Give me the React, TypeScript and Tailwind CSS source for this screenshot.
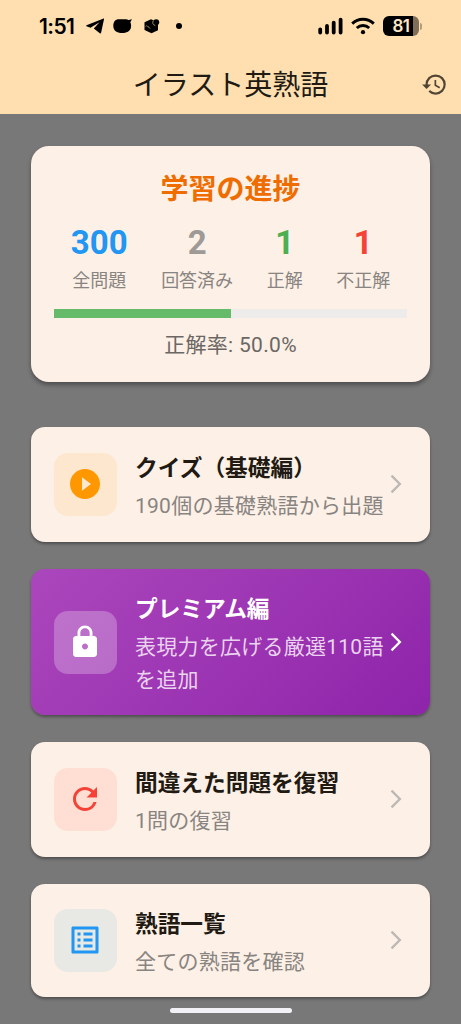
import type { ReactNode } from 'react';
import { MdArrowForwardIos, MdHistory, MdListAlt, MdLock, MdPlayCircleFilled, MdRefresh } from 'react-icons/md';

function StatusBar() {
  return (
    <div className="flex h-[54px] items-center pr-[39px] pb-[2px] pl-[39px] text-black">
      <span className="w-[38px] font-[Inter] text-[21px] leading-none font-semibold tracking-[-0.6px]">1:51</span>
      <svg className="ml-[9px] h-4 w-[18px]" viewBox="0 0 18 16" fill="currentColor">
        <path d="M17.600 0.600 0.500 7.200c-.5.200-.5.900 0 1.100L4.500 9.800 13.500 4.200 7.800 10.400 13.800 15.200c.6.400 1.200.1 1.300-.5L18 1.200c.1-.4-.1-.7-.4-.6Z" />
      </svg>
      <svg className="ml-[9px] h-4 w-[19px]" viewBox="0 0 19 16" fill="currentColor">
        <path d="M6 1.200h7c1 0 1.700.4 2.400.9.9.1 2-.2 3.300-1-.2 1.400-.8 2.400-1.400 3.100.6 1 .8 2.200.8 3.800C18.100 12.700 14.500 15 9.200 15 3.700 15 .3 12.500.3 8 .3 3.800 2.200 1.200 6 1.200Z" />
      </svg>
      <svg className="ml-[12px] h-4 w-4" viewBox="0 0 16 16" fill="currentColor">
        <path d="M.5 4.300 7 1.300l7 3v8L7.500 15.300.5 12Z" />
        <circle cx="12.200" cy="4.300" r="3" />
        <path d="M9.300 2.500c-1.300 2.200-.3 4.300 2 5.200" stroke="#ffdfb0" strokeWidth=".6" fill="none" />
        <path d="M1.500 8.400 3 7.600l1.500 2.200M4.300 8.300l2 2.500" stroke="#a08a6a" strokeWidth=".7" fill="none" />
      </svg>
      <span className="ml-[16px] size-[6px] rounded-full bg-black" />
      <svg className="ml-auto h-[18px] w-[26px]" viewBox="0 0 26 18" stroke="currentColor" strokeWidth="3.800" strokeLinecap="round">
        <path d="M2.200 12.300v3.300M9 9v6.600M15.700 5.600v10M22.600 2.600v13" />
      </svg>
      <svg className="ml-[7px] h-[18px] w-6" viewBox="0 0 24 18" fill="none" stroke="currentColor" strokeWidth="2.900">
        <path d="M1.200 6.600a15.500 15.500 0 0 1 21.600 0M5.800 11a9 9 0 0 1 12.400 0" />
        <circle cx="12" cy="15.200" r="2.100" fill="currentColor" stroke="none" />
      </svg>
      <div className="ml-[8px] flex items-center">
        <div className="flex h-[20px] w-[36px] items-center justify-center overflow-hidden rounded-[6px] bg-[linear-gradient(to_right,#000_82%,#806f58_82%)] font-[Inter] text-[17px] leading-none font-semibold tracking-[-0.5px] text-[#ffe7c8]">
          81
        </div>
        <span className="ml-[1px] h-[7px] w-[2px] rounded-r bg-[#b39c7b]" />
      </div>
    </div>
  );
}

function Header() {
  return (
    <header className="h-[114px] bg-[#ffdfb0]">
      <StatusBar />
      <div className="grid h-[58px] grid-cols-[60px_1fr_60px] items-center">
        <h1 className="col-start-2 pt-[3px] text-center text-[28px] leading-[58px] font-normal whitespace-nowrap text-[#211a13]">イラスト英熟語</h1>
        <MdHistory className="ml-[20px] size-[27px] text-[#514534]" />
      </div>
    </header>
  );
}

function Stat({ value, label, color }: { value: string; label: string; color: string }) {
  return (
    <div className="flex flex-col items-center">
      <span className={`text-[33px] leading-[38px] font-bold ${color}`}>{value}</span>
      <span className="mt-[6px] text-[18px] leading-[26px] text-[#888481]">{label}</span>
    </div>
  );
}

function ProgressCard() {
  return (
    <section className="mt-[32px] h-[236px] rounded-[18px] bg-[#fdf0e6] px-[23px] pt-[24px] shadow-[0_3px_4px_rgba(0,0,0,0.35)]">
      <h2 className="text-center text-[28px] leading-[40px] font-bold text-[#ef6c00]">学習の進捗</h2>
      <div className="mt-[14px] flex justify-around">
        <Stat value="300" label="全問題" color="text-[#2196f3]" />
        <Stat value="2" label="回答済み" color="text-[#9e9a97]" />
        <Stat value="1" label="正解" color="text-[#4caf50]" />
        <Stat value="1" label="不正解" color="text-[#f44336]" />
      </div>
      <div className="mt-[15px] h-[9px] bg-[#eeecea]">
        <div className="h-full w-1/2 bg-[#66bb6a]" />
      </div>
      <p className="mt-[11px] text-center text-[21px] leading-[32px] tracking-[0.300px] text-[#6b6764]">正解率: 50.0%</p>
    </section>
  );
}

interface MenuCardProps {
  icon: ReactNode;
  title: string;
  subtitle: string;
  card: string;
  tile: string;
  titleColor: string;
  subtitleColor: string;
  arrowColor: string;
}

function MenuCard({ icon, title, subtitle, card, tile, titleColor, subtitleColor, arrowColor }: MenuCardProps) {
  return (
    <section className={`flex items-center rounded-[14px] pr-[23px] pl-[23px] shadow-[0_2px_3px_rgba(0,0,0,0.35)] ${card}`}>
      <div className={`flex size-[63px] shrink-0 items-center justify-center rounded-[14px] pr-[2px] pb-[1px] ${tile}`}>{icon}</div>
      <div className="ml-[18px] w-[251px] shrink-0 pt-[4px]">
        <h3 className={`text-[22.700px] leading-[36px] font-bold whitespace-nowrap ${titleColor}`}>{title}</h3>
        <p className={`mt-[3px] text-[21px] leading-[32.500px] tracking-[0.250px] break-all ${subtitleColor}`}>{subtitle}</p>
      </div>
      <MdArrowForwardIos className={`-ml-[1px] mb-[1px] size-[22px] shrink-0 ${arrowColor}`} />
    </section>
  );
}

const light = {
  titleColor: 'text-[#211a13]',
  subtitleColor: 'text-[#888481]',
  arrowColor: 'text-[#bdb8b4]',
};

export default function App() {
  return (
    <div className="flex h-[1024px] w-[461px] flex-col overflow-hidden bg-[#787878] font-[Roboto,'Noto_Sans_CJK_JP',sans-serif]" lang="ja">
      <Header />
      <main className="flex flex-col px-[31px]">
        <ProgressCard />
        <div className="mt-[45px] flex flex-col gap-[27px]">
          <MenuCard
            {...light}
            icon={<MdPlayCircleFilled className="size-[36px] text-[#ff9800]" />}
            title="クイズ（基礎編）"
            subtitle="190個の基礎熟語から出題"
            card="h-[115px] bg-[#fdf0e6]"
            tile="bg-[#fee7cf]"
          />
          <MenuCard
            icon={<MdLock className="size-[36px] text-white" />}
            title="プレミアム編"
            subtitle="表現力を広げる厳選110語を追加"
            card="h-[146px] bg-[linear-gradient(135deg,#ab47bc,#8e24aa)]"
            tile="bg-white/25"
            titleColor="text-white"
            subtitleColor="text-[#ead3ee]"
            arrowColor="text-white"
          />
          <MenuCard
            {...light}
            icon={<MdRefresh className="size-[36px] text-[#f44336]" />}
            title="間違えた問題を復習"
            subtitle="1問の復習"
            card="h-[115px] bg-[#fdf0e6]"
            tile="bg-[#ffded4]"
          />
          <MenuCard
            {...light}
            icon={<MdListAlt className="size-[36px] text-[#2196f3]" />}
            title="熟語一覧"
            subtitle="全ての熟語を確認"
            card="h-[113px] bg-[#fdf0e6]"
            tile="bg-[#e8e8e5]"
          />
        </div>
      </main>
      <div className="mt-[11px] h-[5px] w-[122px] shrink-0 self-center rounded-full bg-[#f2f2f6]" />
    </div>
  );
}
